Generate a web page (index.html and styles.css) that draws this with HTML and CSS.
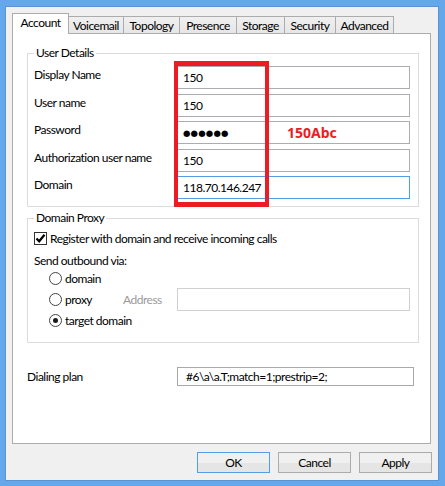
FILE: index.html
```html
<!DOCTYPE html>
<html>
<head>
<meta charset="utf-8">
<link rel="stylesheet" href="styles.css">
</head>
<body>
<div class="window">
  <div class="tabs">
    <div class="tab active w-account">Account</div>
    <div class="tab w-voicemail">Voicemail</div>
    <div class="tab w-topology">Topology</div>
    <div class="tab w-presence">Presence</div>
    <div class="tab w-storage">Storage</div>
    <div class="tab w-security">Security</div>
    <div class="tab w-advanced">Advanced</div>
  </div>
  <div class="panel">
    <fieldset class="group details">
      <legend>User Details</legend>
      <div class="form">
        <div class="label">Display Name</div>
        <div class="textbox">150</div>
        <div class="label">User name</div>
        <div class="textbox">150</div>
        <div class="label">Password</div>
        <div class="textbox"><span class="dots">●●●●●●</span></div>
        <div class="label">Authorization user name</div>
        <div class="textbox">150</div>
        <div class="label">Domain</div>
        <div class="textbox focus">118.70.146.247</div>
      </div>
    </fieldset>

    <fieldset class="group proxy">
      <legend>Domain Proxy</legend>
      <div class="check-row">
        <span class="checkbox"><svg width="11" height="11" viewBox="0 0 11 11"><path d="M1.5 5.5 L4.2 8.3 L9.5 1.8" fill="none" stroke="#000" stroke-width="2.2"/></svg></span>
        <span>Register with domain and receive incoming calls</span>
      </div>
      <div class="send-label">Send outbound via:</div>
      <div class="radios">
        <div class="radio-row"><span class="radio-item"><span class="radio"></span>domain</span></div>
        <div class="radio-row">
          <span class="radio-item fixed"><span class="radio"></span>proxy</span>
          <span class="addr-label">Address</span>
          <div class="textbox disabled"></div>
        </div>
        <div class="radio-row"><span class="radio-item"><span class="radio checked"></span>target domain</span></div>
      </div>
    </fieldset>

    <div class="dial-row">
      <div class="dial-label">Dialing plan</div>
      <div class="textbox small">#6\a\a.T;match=1;prestrip=2;</div>
    </div>

    <div class="annot-box"></div>
    <div class="annot-text">150Abc</div>
  </div>
  <div class="buttons">
    <button class="btn default">OK</button>
    <button class="btn">Cancel</button>
    <button class="btn">Apply</button>
  </div>
</div>
</body>
</html>
```
FILE: styles.css
```css
* { box-sizing: border-box; }
html, body { margin: 0; padding: 0; }
body {
  background: #64a7ea;
  width: 445px;
  height: 486px;
  overflow: hidden;
  font-family: Lato, "Liberation Sans", sans-serif;
  font-size: 12px;
  letter-spacing: -0.5px;
  color: #000;
}
.window {
  margin: 6px 6px 5px 5px;
  height: 475px;
  background: #f0f0f0;
  border: 1px solid #5a93d2;
  padding: 6px 7px 0 6px;
  display: flex;
  flex-direction: column;
}
.tabs {
  display: flex;
  align-items: flex-end;
  height: 21px;
}
.tab {
  height: 18px;
  border: 1px solid #acacac;
  border-bottom: none;
  margin-left: -1px;
  background: linear-gradient(#f0f0f0, #e5e5e5);
  padding-top: 1px;
  line-height: 16px;
  text-align: center;
  white-space: nowrap;
}
.tab:first-child { margin-left: 0; }
.tab.active {
  height: 21px;
  background: #fff;
  position: relative;
  z-index: 1;
  padding-top: 1px;
}
.w-account { width: 57px; }
.w-voicemail { width: 56px; }
.w-topology { width: 57px; }
.w-presence { width: 58px; }
.w-storage { width: 49px; }
.w-security { width: 52px; }
.w-advanced { width: 59px; }

.panel {
  position: relative;
  margin-top: -1px;
  height: 411px;
  background: #fff;
  border: 1px solid #acacac;
  padding: 12px 11px 0 14px;
}
.group {
  margin: 0;
  border: 1px solid #dcdcdc;
  padding: 6px 8px 7px 6px;
  min-width: 0;
}
.group legend {
  padding: 0 2px;
  line-height: 14px;
}
.group.proxy {
  margin-top: 4px;
  padding-bottom: 11px;
}
.form {
  display: grid;
  grid-template-columns: 142px 1fr;
  grid-auto-rows: 23px;
  row-gap: 4.5px;
}
.label {
  line-height: 14px;
  padding-top: 2px;
  white-space: nowrap;
}
.textbox {
  height: 23px;
  border: 1px solid #abadb3;
  background: #fff;
  padding-left: 6px;
  display: flex;
  align-items: center;
  white-space: nowrap;
}
.textbox.focus { border-color: #569de5; }
.textbox.disabled {
  flex: 1;
  border-color: #d0d0d0;
}
.textbox.small {
  height: 19px;
  flex: 1;
  margin-right: 5px;
  padding-left: 8px;
  border-color: #a9a9a9;
}
.dots {
  font-family: "DejaVu Sans", sans-serif;
  font-size: 8.5px;
  letter-spacing: 0.2px;
}
.check-row {
  display: flex;
  align-items: center;
  height: 15px;
  gap: 3px;
}
.checkbox {
  flex: none;
  width: 13px;
  height: 13px;
  border: 1px solid #333;
  background: #fff;
  display: flex;
  align-items: center;
  justify-content: center;
}
.send-label {
  margin-top: 7px;
  line-height: 15px;
}
.radios { padding-left: 15px; }
.radio-row {
  display: flex;
  align-items: center;
  height: 21px;
}
.radio-item {
  display: flex;
  align-items: center;
  gap: 3px;
  white-space: nowrap;
}
.radio-item.fixed { width: 74px; flex: none; }
.radio {
  flex: none;
  width: 13px;
  height: 13px;
  border: 1px solid #444;
  border-radius: 50%;
  background: #fff;
  display: flex;
  align-items: center;
  justify-content: center;
}
.radio.checked::after {
  content: "";
  width: 5px;
  height: 5px;
  border-radius: 50%;
  background: #1a1a1a;
}
.addr-label {
  flex: none;
  width: 54px;
  color: #9a9a9a;
}
.dial-row {
  margin-top: 24px;
  display: flex;
  align-items: center;
}
.dial-label { width: 150px; flex: none; }

.annot-box {
  position: absolute;
  left: 161px;
  top: 27px;
  width: 95px;
  height: 146px;
  border: solid #ed1c24;
  border-width: 5px 4px;
}
.annot-text {
  position: absolute;
  left: 274px;
  top: 89px;
  font-family: "Noto Sans", sans-serif;
  font-weight: bold;
  font-size: 14px;
  letter-spacing: 0;
  line-height: 19px;
  color: #ed1c24;
}
.buttons {
  margin-top: 8px;
  margin-right: -1px;
  display: flex;
  justify-content: flex-end;
  gap: 8px;
}
.btn {
  width: 73px;
  height: 21px;
  border: 1px solid #acacac;
  background: linear-gradient(#f0f0f0 50%, #e5e5e5 50%);
  font: inherit;
  letter-spacing: -0.5px;
  color: #000;
  padding: 0;
}
.btn.default { border-color: #569de5; }
```
